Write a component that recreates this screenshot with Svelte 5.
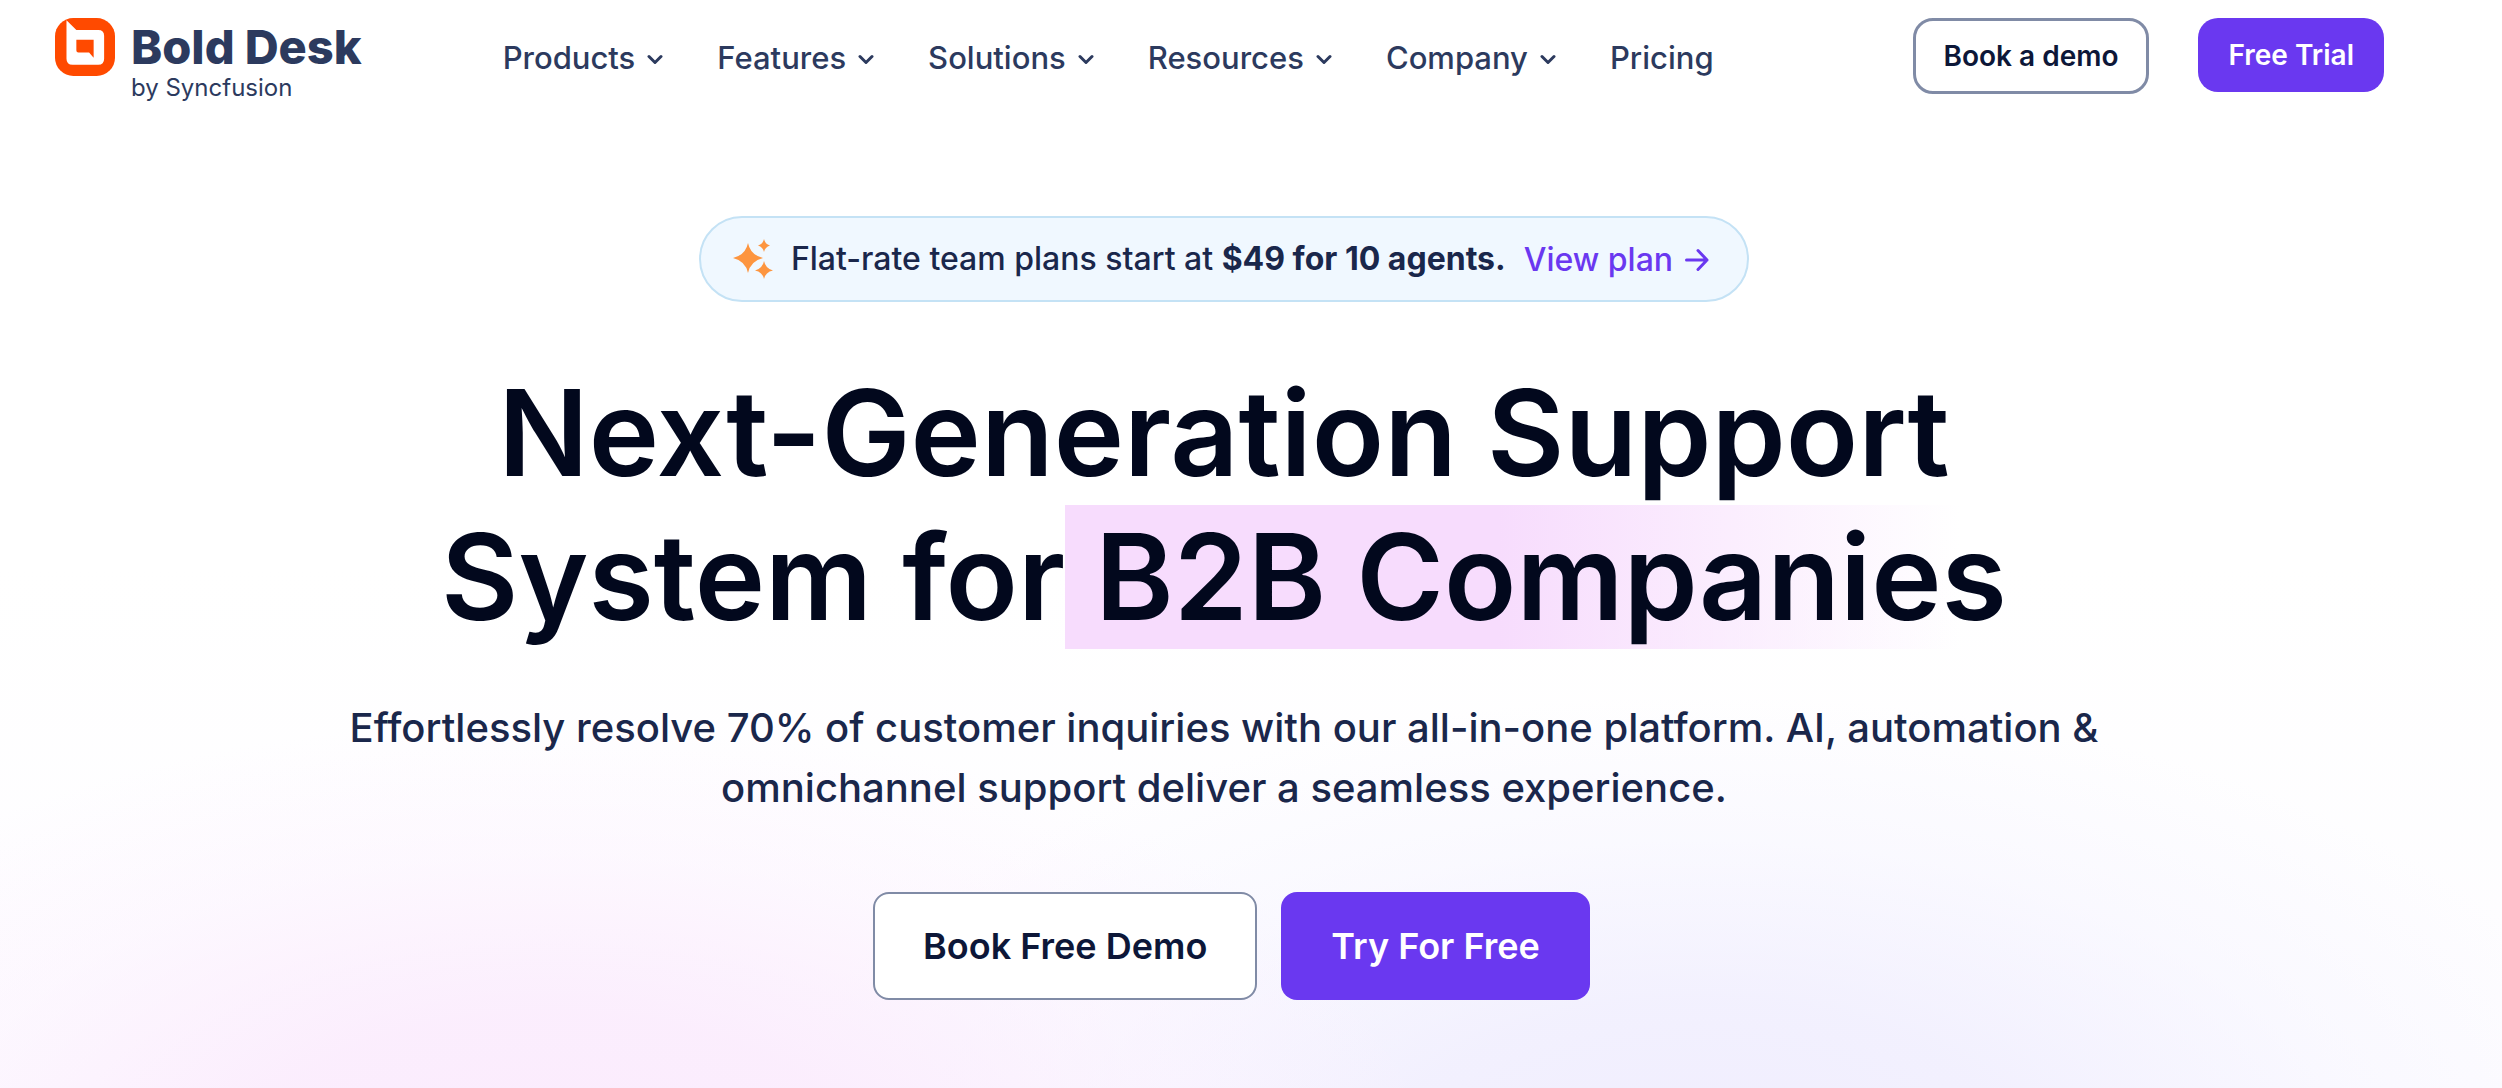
<script lang="ts">
type NavItem = {
	label: string;
	menu: boolean;
};

const navItems: NavItem[] = [
	{ label: 'Products', menu: true },
	{ label: 'Features', menu: true },
	{ label: 'Solutions', menu: true },
	{ label: 'Resources', menu: true },
	{ label: 'Company', menu: true },
	{ label: 'Pricing', menu: false }
];
</script>

<div class="page">
	<header>
		<a class="logo" href="#home" aria-label="BoldDesk by Syncfusion">
			<svg width="60" height="58" viewBox="0 0 59 57" aria-hidden="true">
				<rect width="59" height="57" rx="18" fill="#ff4a00" />
				<path d="M11.3 2.3 L21 11.7 H42.5 Q48.3 11.7 48.3 17.5 V40 Q48.3 46 42.5 46 H17.3 Q11.3 46 11.3 40 Z" fill="#fff" />
				<path d="M21 21.3 H38 V39 L33.5 34 H23 Q21 34 21 32 Z" fill="#ff4a00" />
			</svg>
			<span class="wordmark">
				<span class="name"><span>Bold</span><span>Desk</span></span>
				<span class="byline">by Syncfusion</span>
			</span>
		</a>

		<nav>
			{#each navItems as item (item.label)}
				<a href="#{item.label.toLowerCase()}">
					{item.label}
					{#if item.menu}
						<svg width="16" height="12" viewBox="0 0 16 12" aria-hidden="true">
							<path d="M2 2.5 L8 8.5 L14 2.5" />
						</svg>
					{/if}
				</a>
			{/each}
		</nav>

		<div class="header-actions">
			<button class="small outline">Book a demo</button>
			<button class="small solid">Free Trial</button>
		</div>
	</header>

	<main>
		<div class="banner">
			<svg class="sparkles" width="40" height="40" viewBox="0 1 40 40" aria-hidden="true">
				<path d="M15 5 Q17.5 17 30 20 Q17.5 23 15 35 Q12.5 23 0 20 Q12.5 17 15 5Z" />
				<path d="M31 1 Q32 6 37 7.5 Q32 9 31 14 Q30 9 25 7.5 Q30 6 31 1Z" />
				<path d="M31 23 Q32.5 30.5 40 32.5 Q32.5 34 31 41 Q29.5 34 22 32.5 Q29.5 30.5 31 23Z" />
			</svg>
			<span>Flat-rate team plans start at <strong>$49 for 10 agents.</strong></span>
			<a href="#plans">
				View plan
				<svg width="24" height="24" viewBox="0 0 24 24" aria-hidden="true">
					<path d="M1.5 12 H22 M13 2.5 L22 12 L13 21.5" />
				</svg>
			</a>
		</div>

		<h1>Next-Generation Support<br />System for<span class="highlight">&nbsp;B2B Companies</span></h1>

		<p>
			Effortlessly resolve 70% of customer inquiries with our all-in-one platform. AI, automation &amp;
			omnichannel support deliver a seamless experience.
		</p>

		<div class="actions">
			<button class="large outline">Book Free Demo</button>
			<button class="large solid">Try For Free</button>
		</div>
	</main>
</div>

<style>
:global(body) {
	margin: 0;
	background: #fff;
}

.page {
	min-height: 100vh;
	box-sizing: border-box;
	font-family: Inter, "Liberation Sans", sans-serif;
	color: #1a274b;
	background:
		radial-gradient(ellipse 36% 42% at 22% 108%, #fbebfd 0%, rgba(251, 236, 253, 0.9) 35%, rgba(252, 240, 254, 0.4) 70%, rgba(255, 255, 255, 0) 100%),
		radial-gradient(ellipse 38% 44% at 68% 108%, #f0edfe 0%, rgba(241, 239, 254, 0.9) 35%, rgba(244, 243, 255, 0.4) 70%, rgba(255, 255, 255, 0) 100%),
		linear-gradient(#fff 52%, #fdfcff 100%);
}

header {
	display: flex;
	align-items: flex-start;
	padding: 18px 118px 0 55px;
}

.logo {
	display: flex;
	gap: 16px;
	margin-right: 141px;
	color: #2c3a5e;
	text-decoration: none;
}

.wordmark {
	display: flex;
	flex-direction: column;
}

.name {
	display: flex;
	gap: 10px;
	font-size: 47px;
	font-weight: 800;
	line-height: 58px;
}

.byline {
	font-size: 24px;
	font-weight: 400;
	line-height: 24px;
}

nav {
	display: flex;
	gap: 54px;
}

nav a {
	display: flex;
	align-items: center;
	gap: 12px;
	color: #2c3a5e;
	font-size: 31px;
	font-weight: 500;
	line-height: 80px;
	text-decoration: none;
}

nav svg {
	margin-top: 4px;
	fill: none;
	stroke: #2c3a5e;
	stroke-width: 3;
	stroke-linecap: round;
	stroke-linejoin: round;
}

.header-actions {
	display: flex;
	align-items: flex-start;
	gap: 49px;
	margin-left: auto;
}

button {
	border: none;
	font-family: inherit;
	font-weight: 600;
	cursor: pointer;
}

.outline {
	border: 2px solid #808ba6;
	background: #fff;
	color: #0d1738;
}

.solid {
	background: #6a38f0;
	color: #fff;
}

.small {
	padding: 20px 30px;
	border-radius: 20px;
	font-size: 28px;
	line-height: 34px;
}

.small.outline {
	border-width: 3px;
	padding: 18px 28px;
}

.large {
	padding: 32px 50px;
	border-radius: 16px;
	font-size: 36px;
	line-height: 44px;
}

.large.outline {
	padding: 30px 48px;
}

main {
	display: flex;
	flex-direction: column;
	align-items: center;
	padding: 116px 54px 88px 0;
	text-align: center;
}

.banner {
	display: flex;
	align-items: center;
	gap: 18px;
	padding: 20px 38px 20px 32px;
	border: 2px solid #c4e2f5;
	border-radius: 43px;
	background: #f0f8ff;
	font-size: 32px;
	font-weight: 500;
	line-height: 40px;
}

.sparkles {
	fill: #fd953f;
}

.banner a {
	display: flex;
	align-items: center;
	gap: 12px;
	padding-top: 2px;
	color: #6a38f0;
	text-decoration: none;
}

.banner a svg {
	fill: none;
	stroke: #6a38f0;
	stroke-width: 3;
	stroke-linecap: round;
	stroke-linejoin: round;
}

h1 {
	margin: 59px 0 0;
	color: #02081d;
	font-size: 119px;
	font-weight: 600;
	line-height: 144px;
}

.highlight {
	background: linear-gradient(90deg, #f7dcfd 46%, rgba(255, 248, 255, 0) 95%);
}

p {
	max-width: 1800px;
	margin: 49px 0 0;
	font-size: 40px;
	font-weight: 500;
	line-height: 60px;
}

.actions {
	display: flex;
	gap: 24px;
	margin-top: 74px;
	padding-left: 15px;
}
</style>
